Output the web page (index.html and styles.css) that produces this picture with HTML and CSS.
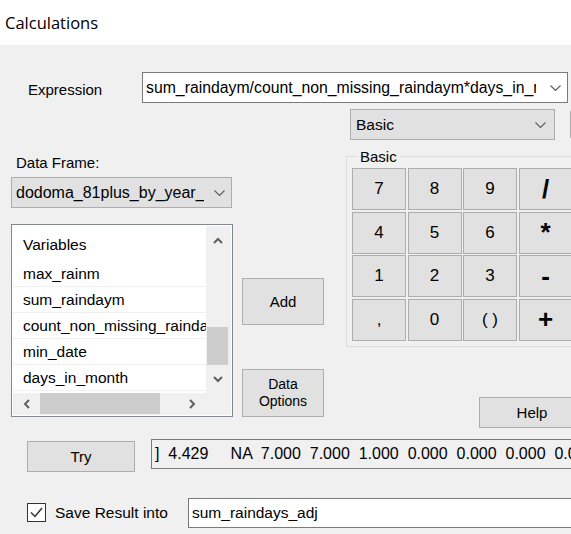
FILE: index.html
```html
<!DOCTYPE html>
<html>
<head>
<meta charset="utf-8">
<title>Calculations</title>
<link rel="stylesheet" href="styles.css">
</head>
<body>
<div class="window">
  <div class="titlebar">Calculations</div>
  <div class="client">
    <div class="row-expr">
      <div class="lbl lbl-expr">Expression</div>
      <div class="combo combo-edit combo-expr">
        <span class="combo-text expr-text">sum_raindaym/count_non_missing_raindaym*days_in_month</span>
        <span class="chev"><svg width="11" height="6" viewBox="0 0 11 6"><polyline points="0.5,0.5 5.5,5.5 10.5,0.5" fill="none" stroke="#606060" stroke-width="1.2"/></svg></span>
      </div>
    </div>

    <div class="row-cat">
      <div class="combo combo-cat">
        <span class="combo-text">Basic</span>
        <span class="chev"><svg width="11" height="6" viewBox="0 0 11 6"><polyline points="0.5,0.5 5.5,5.5 10.5,0.5" fill="none" stroke="#606060" stroke-width="1.2"/></svg></span>
      </div>
      <div class="edge-box"></div>
    </div>

    <div class="middle">
      <div class="col-left">
        <div class="lbl lbl-df">Data Frame:</div>
        <div class="combo combo-df">
          <span class="combo-text df-text">dodoma_81plus_by_year_month</span>
          <span class="chev"><svg width="11" height="6" viewBox="0 0 11 6"><polyline points="0.5,0.5 5.5,5.5 10.5,0.5" fill="none" stroke="#606060" stroke-width="1.2"/></svg></span>
        </div>
        <div class="listbox">
          <div class="list-content">
            <div class="list-header">Variables</div>
            <div class="list-item">max_rainm</div>
            <div class="list-item">sum_raindaym</div>
            <div class="list-item">count_non_missing_raindaym</div>
            <div class="list-item">min_date</div>
            <div class="list-item">days_in_month</div>
          </div>
          <div class="vscroll">
            <span class="sb-arrow sb-up"><svg width="10" height="7" viewBox="0 0 10 7"><polyline points="1,6 5,2 9,6" fill="none" stroke="#606060" stroke-width="2"/></svg></span>
            <span class="vthumb"></span>
            <span class="sb-arrow sb-down"><svg width="10" height="7" viewBox="0 0 10 7"><polyline points="1,1 5,5 9,1" fill="none" stroke="#606060" stroke-width="2"/></svg></span>
          </div>
          <div class="hscroll">
            <span class="sb-arrow sb-left"><svg width="7" height="10" viewBox="0 0 7 10"><polyline points="6,1 2,5 6,9" fill="none" stroke="#606060" stroke-width="2"/></svg></span>
            <span class="hthumb"></span>
            <span class="sb-arrow sb-right"><svg width="7" height="10" viewBox="0 0 7 10"><polyline points="1,1 5,5 1,9" fill="none" stroke="#606060" stroke-width="2"/></svg></span>
          </div>
          <div class="sb-corner"></div>
        </div>
      </div>

      <div class="col-mid">
        <button class="btn btn-add">Add</button>
        <button class="btn btn-opt">Data<br>Options</button>
      </div>

      <div class="col-right">
        <fieldset class="group">
          <legend class="group-title">Basic</legend>
          <div class="keypad">
            <button class="btn key">7</button>
            <button class="btn key">8</button>
            <button class="btn key">9</button>
            <button class="btn key key-op">/</button>
            <button class="btn key">4</button>
            <button class="btn key">5</button>
            <button class="btn key">6</button>
            <button class="btn key key-op">*</button>
            <button class="btn key">1</button>
            <button class="btn key">2</button>
            <button class="btn key">3</button>
            <button class="btn key key-op">-</button>
            <button class="btn key">,</button>
            <button class="btn key">0</button>
            <button class="btn key">( )</button>
            <button class="btn key key-op">+</button>
          </div>
        </fieldset>
        <button class="btn btn-help">Help</button>
      </div>
    </div>

    <div class="row-try">
      <button class="btn btn-try">Try</button>
      <div class="output">]  4.429     NA  7.000  7.000  1.000  0.000  0.000  0.000  0.000  0.000</div>
    </div>

    <div class="row-save">
      <span class="checkbox"><svg width="17" height="17" viewBox="0 0 17 17"><polyline points="3,8.5 7,12.5 14,4" fill="none" stroke="#333" stroke-width="1.5"/></svg></span>
      <span class="lbl lbl-save">Save Result into</span>
      <div class="textbox">sum_raindays_adj</div>
    </div>
  </div>
</div>
</body>
</html>
```
FILE: styles.css
```css
* { box-sizing: border-box; }
html, body { margin: 0; padding: 0; }
body {
  width: 571px;
  height: 534px;
  overflow: hidden;
  background: #f0f0f0;
  font-family: "Liberation Sans", Arial, sans-serif;
  font-size: 15px;
  color: #000;
}
.window {
  width: 571px;
  height: 534px;
  overflow: hidden;
  display: flex;
  flex-direction: column;
}
.titlebar {
  flex: none;
  height: 45px;
  background: #fff;
  padding-left: 5px;
  font-family: "Open Sans", "Noto Sans", sans-serif;
  font-size: 16.5px;
  line-height: 45px;
}
.client {
  flex: 1;
  background: #f0f0f0;
  display: flex;
  flex-direction: column;
}
.lbl { white-space: nowrap; }

/* combos */
.combo {
  flex: none;
  height: 31px;
  display: flex;
  align-items: center;
  border: 1px solid #adadad;
  background: #e1e1e1;
}
.combo-edit { background: #fff; border-color: #7a7a7a; }
.combo-text {
  overflow: hidden;
  white-space: nowrap;
  font-size: 15.5px;
}
.chev { display: flex; margin-left: auto; }

.row-expr {
  display: flex;
  align-items: center;
  margin-top: 27px;
  height: 31px;
}
.lbl-expr { width: 142px; padding-left: 28px; padding-top: 4px; }
.combo-expr { width: 426px; }
.expr-text { width: 393px; padding-left: 3px; font-size: 15.8px; }
.combo-expr .chev { margin-right: 6px; }

.row-cat {
  display: flex;
  margin-top: 6px;
  height: 31px;
  padding-left: 350px;
}
.combo-cat { width: 205px; }
.combo-cat .combo-text { padding-left: 5px; }
.combo-cat .chev { margin-right: 8px; }
.edge-box {
  flex: none;
  width: 20px;
  height: 27px;
  margin: 2px 0 0 15px;
  border: 1px solid #adadad;
  background: #e1e1e1;
}

/* middle */
.middle { display: flex; align-items: flex-start; }
.col-left {
  flex: none;
  width: 222px;
  margin-left: 11px;
  display: flex;
  flex-direction: column;
}
.lbl-df { margin-top: 14px; line-height: 18px; padding-left: 5px; }
.combo-df { width: 221px; margin-top: 5px; }
.df-text { width: 192px; padding-left: 4px; font-size: 16px; }
.combo-df .chev { margin-right: 6px; }

.listbox {
  margin-top: 16px;
  width: 222px;
  height: 193px;
  border: 1px solid #828790;
  background: #fff;
  padding: 1px;
  display: grid;
  grid-template-columns: 193px 25px;
  grid-template-rows: 167px 22px;
}
.list-content { overflow: hidden; }
.list-header {
  height: 35px;
  display: flex;
  align-items: center;
  padding: 2px 0 0 10px;
  font-size: 15.5px;
}
.list-item {
  height: 26px;
  line-height: 25px;
  border-bottom: 1px solid #f0f0f0;
  padding-left: 10px;
  white-space: nowrap;
  overflow: hidden;
  font-size: 15.5px;
}
.vscroll {
  background: #f0f0f0;
  display: flex;
  flex-direction: column;
  padding: 0 3px 0 1px;
}
.sb-arrow { display: flex; align-items: center; justify-content: center; flex: none; }
.sb-up, .sb-down { height: 28px; }
.vthumb { flex: none; height: 38px; margin-top: 73px; background: #cdcdcd; }
.hscroll {
  background: #f0f0f0;
  display: flex;
  align-items: stretch;
}
.sb-left { width: 26px; }
.hthumb { flex: none; width: 120px; margin: 0 0 1px 1px; background: #cdcdcd; }
.sb-right { width: 27px; margin-left: auto; }
.sb-corner { background: #f0f0f0; }

/* buttons */
.btn {
  font-family: inherit;
  font-size: 15px;
  color: #000;
  background: #e1e1e1;
  border: 1px solid #adadad;
  border-radius: 0;
  padding: 0;
  margin: 0;
  display: flex;
  align-items: center;
  justify-content: center;
  text-align: center;
  flex: none;
}
.col-mid {
  flex: none;
  width: 82px;
  margin-left: 9px;
  display: flex;
  flex-direction: column;
}
.btn-add { height: 47px; margin-top: 138px; }
.btn-opt { height: 48px; margin-top: 44px; font-size: 14px; line-height: 17px; }

.col-right {
  flex: none;
  width: 260px;
  margin-left: 22px;
  display: flex;
  flex-direction: column;
}
.group {
  margin: 8px 0 0 0;
  padding: 3px 5px 5px 5px;
  border: 1px solid #dcdcdc;
  min-width: 0;
  width: 240px;
}
.group-title {
  padding: 0 3px;
  margin-left: 5px;
  line-height: 17px;
  font-size: 15px;
}
.keypad {
  display: grid;
  grid-template-columns: repeat(4, 54px);
  grid-template-rows: repeat(4, 42px);
  gap: 1.5px;
}
.key { font-size: 17px; }
.key-op { font-size: 26px; font-weight: bold; }
.btn-help { width: 106px; height: 31px; margin: 50px 0 0 133px; }

/* try row */
.row-try {
  display: flex;
  align-items: flex-start;
  margin-top: 11px;
  padding-left: 27px;
}
.btn-try { width: 108px; height: 31px; margin-top: 2px; }
.output {
  flex: none;
  width: 440px;
  height: 30px;
  margin-left: 16px;
  border: 1px solid #7a7a7a;
  background: #f0f0f0;
  padding-left: 3px;
  font-size: 16px;
  line-height: 28px;
  white-space: pre;
  overflow: hidden;
}

/* save row */
.row-save {
  display: flex;
  align-items: center;
  margin-top: 26px;
  height: 30px;
  padding-left: 27px;
}
.checkbox {
  flex: none;
  width: 19px;
  height: 19px;
  border: 1px solid #333;
  background: #fff;
  display: flex;
}
.lbl-save { flex: none; width: 142px; padding-left: 9px; font-size: 15.5px; }
.textbox {
  flex: none;
  width: 400px;
  height: 30px;
  border: 1px solid #7a7a7a;
  background: #fff;
  padding-left: 3px;
  font-size: 15.5px;
  line-height: 28px;
  white-space: nowrap;
}
```
